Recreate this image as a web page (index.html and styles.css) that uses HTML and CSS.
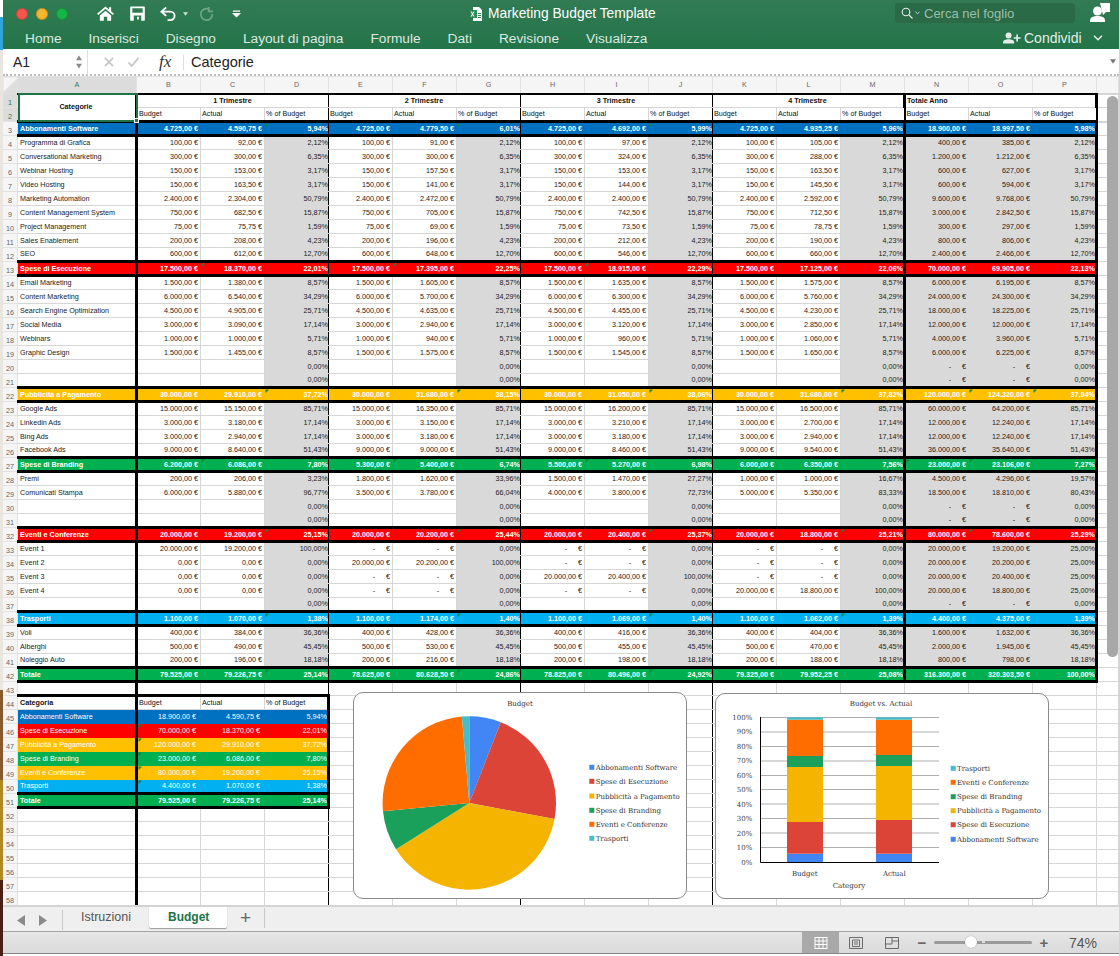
FILE: index.html
```html
<!DOCTYPE html>
<html lang="it">
<head>
<meta charset="utf-8">
<title>Marketing Budget Template</title>
<link rel="stylesheet" href="styles.css">
</head>
<body>
<div class="desktop-edge"></div>
<div class="window">
<header class="ribbon">
  <div class="titlebar">
    <div class="lights"><i class="light red"></i><i class="light yellow"></i><i class="light green"></i></div>
    <div class="quick">
      <svg class="ic home" viewBox="0 0 18 16"><path d="M9 .6 0 8.2l1.2 1.4L9 3l7.8 6.6L18 8.2l-3-2.6V1.4h-2.2v2.3z"/><path d="M3 10 9 5l6 5v5.6h-4.2v-4.2H7.2v4.2H3z"/></svg>
      <svg class="ic floppy" viewBox="0 0 16 16"><path fill-rule="evenodd" d="M1 .5h14a.8.8 0 0 1 .8.8v13.6a.8.8 0 0 1-.8.8H1a.8.8 0 0 1-.8-.8V1.300A.8.8 0 0 1 1 .5zM2.500 2.500v4.700h11V2.500zM4 10v5.700h8V10zM7.500 11.500h2v3h-2z"/></svg>
      <svg class="ic undo" viewBox="0 0 18 16"><path d="M6.500 1.500 1.500 6l5 4.500M2 6h9a4.500 4.500 0 0 1 0 9H8" fill="none" stroke="#fff" stroke-width="2"/></svg>
      <svg class="ic caret" viewBox="0 0 6 4"><path d="M0 0h6L3 4z"/></svg>
      <svg class="ic redo" viewBox="0 0 16 18"><path d="M10.500 1v5h5M10.800 3.500A6.500 6.500 0 1 0 14.500 9" fill="none" stroke="#6da585" stroke-width="2"/></svg>
      <svg class="ic custom" viewBox="0 0 10 8"><path d="M1 0h8v1.500H1zM0 3h10L5 8z"/></svg>
    </div>
    <div class="doc-title">
      <svg class="doc-icon" viewBox="0 0 12 14"><path d="M3 0h6l3 3v11H3z" fill="#fff"/><path d="M0 3h7v8H0z" fill="#2e8b57"/><path d="m1.500 4.500 1 1.500 1-1.500h1L3.100 7l1.500 2.500h-1l-1-1.600-1 1.600h-1L2 7 .6 4.500z" fill="#fff"/><path d="M8 6h3v1H8zm0 2h3v1H8zm0 2h3v1H8z" fill="#2e8b57"/></svg>
      <span>Marketing Budget Template</span>
    </div>
    <div class="search">
      <svg class="search-ic" viewBox="0 0 12 12"><circle cx="5" cy="5" r="3.800"/><path d="m8 8 3.500 3.500"/></svg>
      <svg class="search-caret" viewBox="0 0 6 4"><path d="M.5.500 3 3 5.500.500"/></svg>
      <span>Cerca nel foglio</span>
    </div>
    <svg class="user" viewBox="0 0 20 20"><path d="M10 0h10v9h-4l-3 3z" /><circle cx="7.500" cy="8" r="4.500"/><path d="M0 19v-1.500C0 14 4 13 7.500 13s7.500 1 7.500 4.500V19z"/></svg>
  </div>
  <nav class="tabs">
    <span>Home</span><span>Inserisci</span><span>Disegno</span><span>Layout di pagina</span><span>Formule</span><span>Dati</span><span>Revisione</span><span>Visualizza</span>
    <div class="share">
      <svg class="share-ic" viewBox="0 0 21 14"><circle cx="6.500" cy="4" r="3.500"/><path d="M0 13.500V12c0-2.500 3-3.500 6.500-3.500S13 9.500 13 12v1.500z"/><path d="M15.500 3h2v3h3v2h-3v3h-2V8h-3V6h3z"/></svg>
      <span>Condividi</span>
      <svg class="chev" viewBox="0 0 10 6"><path d="M1 .8 5 4.800 9 .8"/></svg>
    </div>
  </nav>
</header>

<div class="formula">
  <div class="namebox"><span>A1</span><svg class="spin" viewBox="0 0 7 15"><path d="M3.500 0 7 5.500H0zM3.500 15 0 9.500h7z"/></svg></div>
  <svg class="fx-ic" viewBox="0 0 11 11"><path d="m1 1 9 9M10 1 1 10"/></svg>
  <svg class="fx-ic check" viewBox="0 0 13 11"><path d="m1 6 3.500 4L12 1"/></svg>
  <em class="fx">fx</em>
  <span class="formula-text">Categorie</span>
  <svg class="fx-down" viewBox="0 0 7 5"><path d="M0 0h7L3.500 5z"/></svg>
</div>

<main class="sheet">
<table class="grid">
<colgroup><col class="c-row"><col class="c-a"><col span="15" class="c-n"><col class="c-q"></colgroup>
<thead>
<tr class="cols"><th class="corner"></th><th class="sel">A</th><th>B</th><th>C</th><th>D</th><th>E</th><th>F</th><th>G</th><th>H</th><th>I</th><th>J</th><th>K</th><th>L</th><th>M</th><th>N</th><th>O</th><th>P</th><th></th></tr>
<tr class="r1"><th class="sel">1</th><td rowspan="2" class="cat">Categorie</td><td colspan="3" class="q qe">1 Trimestre</td><td colspan="3" class="q qe">2 Trimestre</td><td colspan="3" class="q qe">3 Trimestre</td><td colspan="3" class="q qx">4 Trimestre</td><td colspan="3" class="q qt qx">Totale Anno</td><td></td></tr>
<tr class="r2"><th class="sel">2</th><td>Budget</td><td>Actual</td><td class="qe">% of Budget</td><td>Budget</td><td>Actual</td><td class="qe">% of Budget</td><td>Budget</td><td>Actual</td><td class="qe">% of Budget</td><td>Budget</td><td>Actual</td><td class="qm">% of Budget</td><td>Budget</td><td>Actual</td><td class="qm">% of Budget</td><td class="free"></td></tr>
</thead>
<tbody class="main">
<tr class="b blue"><th>3<td>Abbonamenti Software<td>4.725,00 €<td>4.590,75 €<td class="t">5,94%<td>4.725,00 €<td>4.779,50 €<td class="t">6,01%<td>4.725,00 €<td>4.692,00 €<td class="t">5,99%<td>4.725,00 €<td>4.935,25 €<td>5,96%<td>18.900,00 €<td>18.997,50 €<td>5,98%<td>
<tr class="d"><th>4<td>Programma di Grafica<td>100,00 €<td>92,00 €<td>2,12%<td>100,00 €<td>91,00 €<td>2,12%<td>100,00 €<td>97,00 €<td>2,12%<td>100,00 €<td>105,00 €<td>2,12%<td>400,00 €<td>385,00 €<td>2,12%<td>
<tr class="d"><th>5<td>Conversational Marketing<td>300,00 €<td>300,00 €<td>6,35%<td>300,00 €<td>300,00 €<td>6,35%<td>300,00 €<td>324,00 €<td>6,35%<td>300,00 €<td>288,00 €<td>6,35%<td>1.200,00 €<td>1.212,00 €<td>6,35%<td>
<tr class="d"><th>6<td>Webinar Hosting<td>150,00 €<td>153,00 €<td>3,17%<td>150,00 €<td>157,50 €<td>3,17%<td>150,00 €<td>153,00 €<td>3,17%<td>150,00 €<td>163,50 €<td>3,17%<td>600,00 €<td>627,00 €<td>3,17%<td>
<tr class="d"><th>7<td>Video Hosting<td>150,00 €<td>163,50 €<td>3,17%<td>150,00 €<td>141,00 €<td>3,17%<td>150,00 €<td>144,00 €<td>3,17%<td>150,00 €<td>145,50 €<td>3,17%<td>600,00 €<td>594,00 €<td>3,17%<td>
<tr class="d"><th>8<td>Marketing Automation<td>2.400,00 €<td>2.304,00 €<td>50,79%<td>2.400,00 €<td>2.472,00 €<td>50,79%<td>2.400,00 €<td>2.400,00 €<td>50,79%<td>2.400,00 €<td>2.592,00 €<td>50,79%<td>9.600,00 €<td>9.768,00 €<td>50,79%<td>
<tr class="d"><th>9<td>Content Management System<td>750,00 €<td>682,50 €<td>15,87%<td>750,00 €<td>705,00 €<td>15,87%<td>750,00 €<td>742,50 €<td>15,87%<td>750,00 €<td>712,50 €<td>15,87%<td>3.000,00 €<td>2.842,50 €<td>15,87%<td>
<tr class="d"><th>10<td>Project Management<td>75,00 €<td>75,75 €<td>1,59%<td>75,00 €<td>69,00 €<td>1,59%<td>75,00 €<td>73,50 €<td>1,59%<td>75,00 €<td>78,75 €<td>1,59%<td>300,00 €<td>297,00 €<td>1,59%<td>
<tr class="d"><th>11<td>Sales Enablement<td>200,00 €<td>208,00 €<td>4,23%<td>200,00 €<td>196,00 €<td>4,23%<td>200,00 €<td>212,00 €<td>4,23%<td>200,00 €<td>190,00 €<td>4,23%<td>800,00 €<td>806,00 €<td>4,23%<td>
<tr class="d"><th>12<td>SEO<td>600,00 €<td>612,00 €<td>12,70%<td>600,00 €<td>648,00 €<td>12,70%<td>600,00 €<td>546,00 €<td>12,70%<td>600,00 €<td>660,00 €<td>12,70%<td>2.400,00 €<td>2.466,00 €<td>12,70%<td>
<tr class="b red"><th>13<td>Spese di Esecuzione<td>17.500,00 €<td class="t">18.370,00 €<td>22,01%<td>17.500,00 €<td class="t">17.395,00 €<td>22,25%<td>17.500,00 €<td class="t">18.915,00 €<td>22,29%<td>17.500,00 €<td>17.125,00 €<td>22,06%<td>70.000,00 €<td>69.905,00 €<td>22,13%<td>
<tr class="d"><th>14<td>Email Marketing<td>1.500,00 €<td>1.380,00 €<td>8,57%<td>1.500,00 €<td>1.605,00 €<td>8,57%<td>1.500,00 €<td>1.635,00 €<td>8,57%<td>1.500,00 €<td>1.575,00 €<td>8,57%<td>6.000,00 €<td>6.195,00 €<td>8,57%<td>
<tr class="d"><th>15<td>Content Marketing<td>6.000,00 €<td>6.540,00 €<td>34,29%<td>6.000,00 €<td>5.700,00 €<td>34,29%<td>6.000,00 €<td>6.300,00 €<td>34,29%<td>6.000,00 €<td>5.760,00 €<td>34,29%<td>24.000,00 €<td>24.300,00 €<td>34,29%<td>
<tr class="d"><th>16<td>Search Engine Optimization<td>4.500,00 €<td>4.905,00 €<td>25,71%<td>4.500,00 €<td>4.635,00 €<td>25,71%<td>4.500,00 €<td>4.455,00 €<td>25,71%<td>4.500,00 €<td>4.230,00 €<td>25,71%<td>18.000,00 €<td>18.225,00 €<td>25,71%<td>
<tr class="d"><th>17<td>Social Media<td>3.000,00 €<td>3.090,00 €<td>17,14%<td>3.000,00 €<td>2.940,00 €<td>17,14%<td>3.000,00 €<td>3.120,00 €<td>17,14%<td>3.000,00 €<td>2.850,00 €<td>17,14%<td>12.000,00 €<td>12.000,00 €<td>17,14%<td>
<tr class="d"><th>18<td>Webinars<td>1.000,00 €<td>1.000,00 €<td>5,71%<td>1.000,00 €<td>940,00 €<td>5,71%<td>1.000,00 €<td>960,00 €<td>5,71%<td>1.000,00 €<td>1.060,00 €<td>5,71%<td>4.000,00 €<td>3.960,00 €<td>5,71%<td>
<tr class="d"><th>19<td>Graphic Design<td>1.500,00 €<td>1.455,00 €<td>8,57%<td>1.500,00 €<td>1.575,00 €<td>8,57%<td>1.500,00 €<td>1.545,00 €<td>8,57%<td>1.500,00 €<td>1.650,00 €<td>8,57%<td>6.000,00 €<td>6.225,00 €<td>8,57%<td>
<tr class="d"><th>20<td><td><td><td>0,00%<td><td><td>0,00%<td><td><td>0,00%<td><td><td>0,00%<td>-&emsp;&ensp;€<td>-&emsp;&ensp;€<td>0,00%<td>
<tr class="d"><th>21<td><td><td><td>0,00%<td><td><td>0,00%<td><td><td>0,00%<td><td><td>0,00%<td>-&emsp;&ensp;€<td>-&emsp;&ensp;€<td>0,00%<td>
<tr class="b amber"><th>22<td>Pubblicità a Pagamento<td>30.000,00 €<td>29.910,00 €<td class="t">37,72%<td>30.000,00 €<td>31.680,00 €<td class="t">38,15%<td>30.000,00 €<td>31.050,00 €<td class="t">38,06%<td>30.000,00 €<td>31.680,00 €<td class="t">37,82%<td>120.000,00 €<td class="t">124.320,00 €<td class="t">37,94%<td>
<tr class="d"><th>23<td>Google Ads<td>15.000,00 €<td>15.150,00 €<td>85,71%<td>15.000,00 €<td>16.350,00 €<td>85,71%<td>15.000,00 €<td>16.200,00 €<td>85,71%<td>15.000,00 €<td>16.500,00 €<td>85,71%<td>60.000,00 €<td>64.200,00 €<td>85,71%<td>
<tr class="d"><th>24<td>Linkedin Ads<td>3.000,00 €<td>3.180,00 €<td>17,14%<td>3.000,00 €<td>3.150,00 €<td>17,14%<td>3.000,00 €<td>3.210,00 €<td>17,14%<td>3.000,00 €<td>2.700,00 €<td>17,14%<td>12.000,00 €<td>12.240,00 €<td>17,14%<td>
<tr class="d"><th>25<td>Bing Ads<td>3.000,00 €<td>2.940,00 €<td>17,14%<td>3.000,00 €<td>3.180,00 €<td>17,14%<td>3.000,00 €<td>3.180,00 €<td>17,14%<td>3.000,00 €<td>2.940,00 €<td>17,14%<td>12.000,00 €<td>12.240,00 €<td>17,14%<td>
<tr class="d"><th>26<td>Facebook Ads<td>9.000,00 €<td>8.640,00 €<td>51,43%<td>9.000,00 €<td>9.000,00 €<td>51,43%<td>9.000,00 €<td>8.460,00 €<td>51,43%<td>9.000,00 €<td>9.540,00 €<td>51,43%<td>36.000,00 €<td>35.640,00 €<td>51,43%<td>
<tr class="b green"><th>27<td>Spese di Branding<td>6.200,00 €<td class="t">6.086,00 €<td>7,80%<td>5.300,00 €<td class="t">5.400,00 €<td>6,74%<td>5.500,00 €<td class="t">5.270,00 €<td>6,98%<td>6.000,00 €<td>6.350,00 €<td>7,56%<td class="t">23.000,00 €<td class="t">23.106,00 €<td>7,27%<td>
<tr class="d"><th>28<td>Premi<td>200,00 €<td>206,00 €<td>3,23%<td>1.800,00 €<td>1.620,00 €<td>33,96%<td>1.500,00 €<td>1.470,00 €<td>27,27%<td>1.000,00 €<td>1.000,00 €<td>16,67%<td>4.500,00 €<td>4.296,00 €<td>19,57%<td>
<tr class="d"><th>29<td>Comunicati Stampa<td>6.000,00 €<td>5.880,00 €<td>96,77%<td>3.500,00 €<td>3.780,00 €<td>66,04%<td>4.000,00 €<td>3.800,00 €<td>72,73%<td>5.000,00 €<td>5.350,00 €<td>83,33%<td>18.500,00 €<td>18.810,00 €<td>80,43%<td>
<tr class="d"><th>30<td><td><td><td>0,00%<td><td><td>0,00%<td><td><td>0,00%<td><td><td>0,00%<td>-&emsp;&ensp;€<td>-&emsp;&ensp;€<td>0,00%<td>
<tr class="d"><th>31<td><td><td><td>0,00%<td><td><td>0,00%<td><td><td>0,00%<td><td><td>0,00%<td>-&emsp;&ensp;€<td>-&emsp;&ensp;€<td>0,00%<td>
<tr class="b red"><th>32<td>Eventi e Conferenze<td>20.000,00 €<td>19.200,00 €<td class="t">25,15%<td>20.000,00 €<td>20.200,00 €<td class="t">25,44%<td>20.000,00 €<td>20.400,00 €<td class="t">25,37%<td>20.000,00 €<td>18.800,00 €<td class="t">25,21%<td>80.000,00 €<td class="t">78.600,00 €<td>25,29%<td>
<tr class="d"><th>33<td>Event 1<td>20.000,00 €<td>19.200,00 €<td>100,00%<td>-&emsp;&ensp;€<td>-&emsp;&ensp;€<td>0,00%<td>-&emsp;&ensp;€<td>-&emsp;&ensp;€<td>0,00%<td>-&emsp;&ensp;€<td>-&emsp;&ensp;€<td>0,00%<td>20.000,00 €<td>19.200,00 €<td>25,00%<td>
<tr class="d"><th>34<td>Event 2<td>0,00 €<td>0,00 €<td>0,00%<td>20.000,00 €<td>20.200,00 €<td>100,00%<td>-&emsp;&ensp;€<td>-&emsp;&ensp;€<td>0,00%<td>-&emsp;&ensp;€<td>-&emsp;&ensp;€<td>0,00%<td>20.000,00 €<td>20.200,00 €<td>25,00%<td>
<tr class="d"><th>35<td>Event 3<td>0,00 €<td>0,00 €<td>0,00%<td>-&emsp;&ensp;€<td>-&emsp;&ensp;€<td>0,00%<td>20.000,00 €<td>20.400,00 €<td>100,00%<td>-&emsp;&ensp;€<td>-&emsp;&ensp;€<td>0,00%<td>20.000,00 €<td>20.400,00 €<td>25,00%<td>
<tr class="d"><th>36<td>Event 4<td>0,00 €<td>0,00 €<td>0,00%<td>-&emsp;&ensp;€<td>-&emsp;&ensp;€<td>0,00%<td>-&emsp;&ensp;€<td>-&emsp;&ensp;€<td>0,00%<td>20.000,00 €<td>18.800,00 €<td>100,00%<td>20.000,00 €<td>18.800,00 €<td>25,00%<td>
<tr class="d"><th>37<td><td><td><td>0,00%<td><td><td>0,00%<td><td><td>0,00%<td><td><td>0,00%<td>-&emsp;&ensp;€<td>-&emsp;&ensp;€<td>0,00%<td>
<tr class="b cyan"><th>38<td>Trasporti<td>1.100,00 €<td>1.070,00 €<td class="t">1,38%<td>1.100,00 €<td>1.174,00 €<td class="t">1,40%<td>1.100,00 €<td>1.069,00 €<td class="t">1,40%<td>1.100,00 €<td>1.062,00 €<td class="t">1,39%<td>4.400,00 €<td>4.375,00 €<td>1,39%<td>
<tr class="d"><th>39<td>Voli<td>400,00 €<td>384,00 €<td>36,36%<td>400,00 €<td>428,00 €<td>36,36%<td>400,00 €<td>416,00 €<td>36,36%<td>400,00 €<td>404,00 €<td>36,36%<td>1.600,00 €<td>1.632,00 €<td>36,36%<td>
<tr class="d"><th>40<td>Alberghi<td>500,00 €<td>490,00 €<td>45,45%<td>500,00 €<td>530,00 €<td>45,45%<td>500,00 €<td>455,00 €<td>45,45%<td>500,00 €<td>470,00 €<td>45,45%<td>2.000,00 €<td>1.945,00 €<td>45,45%<td>
<tr class="d"><th>41<td>Noleggio Auto<td>200,00 €<td>196,00 €<td>18,18%<td>200,00 €<td>216,00 €<td>18,18%<td>200,00 €<td>198,00 €<td>18,18%<td>200,00 €<td>188,00 €<td>18,18%<td>800,00 €<td>798,00 €<td>18,18%<td>
<tr class="b green"><th>42<td>Totale<td>79.525,00 €<td>79.226,75 €<td class="t">25,14%<td>78.625,00 €<td>80.628,50 €<td class="t">24,86%<td>78.825,00 €<td>80.496,00 €<td class="t">24,92%<td>79.325,00 €<td>79.952,25 €<td>25,08%<td>316.300,00 €<td>320.303,50 €<td>100,00%<td>
</tbody>
<tbody class="rest">
<tr><th>43<td><td><td><td><td><td><td><td><td><td><td><td><td><td><td><td><td>
<tr class="s shead"><th>44<td>Categoria<td>Budget<td>Actual<td>% of Budget<td><td><td><td><td><td><td><td><td><td><td><td><td>
<tr class="s blue"><th>45<td>Abbonamenti Software<td>18.900,00 €<td>4.590,75 €<td>5,94%<td><td><td><td><td><td><td><td><td><td><td><td><td>
<tr class="s red"><th>46<td>Spese di Esecuzione<td class="t">70.000,00 €<td>18.370,00 €<td>22,01%<td><td><td><td><td><td><td><td><td><td><td><td><td>
<tr class="s amber"><th>47<td>Pubblicità a Pagamento<td class="t">120.000,00 €<td>29.910,00 €<td>37,72%<td><td><td><td><td><td><td><td><td><td><td><td><td>
<tr class="s green"><th>48<td>Spese di Branding<td class="t">23.000,00 €<td>6.086,00 €<td>7,80%<td><td><td><td><td><td><td><td><td><td><td><td><td>
<tr class="s amber"><th>49<td>Eventi e Conferenze<td class="t">80.000,00 €<td>19.200,00 €<td>25,15%<td><td><td><td><td><td><td><td><td><td><td><td><td>
<tr class="s cyan"><th>50<td>Trasporti<td class="t">4.400,00 €<td>1.070,00 €<td>1,38%<td><td><td><td><td><td><td><td><td><td><td><td><td>
<tr class="s green stotal"><th>51<td>Totale<td>79.525,00 €<td>79.226,75 €<td>25,14%<td><td><td><td><td><td><td><td><td><td><td><td><td>
<tr><th>52<td><td><td><td><td><td><td><td><td><td><td><td><td><td><td><td><td>
<tr><th>53<td><td><td><td><td><td><td><td><td><td><td><td><td><td><td><td><td>
<tr><th>54<td><td><td><td><td><td><td><td><td><td><td><td><td><td><td><td><td>
<tr><th>55<td><td><td><td><td><td><td><td><td><td><td><td><td><td><td><td><td>
<tr><th>56<td><td><td><td><td><td><td><td><td><td><td><td><td><td><td><td><td>
<tr><th>57<td><td><td><td><td><td><td><td><td><td><td><td><td><td><td><td><td>
<tr><th>58<td><td><td><td><td><td><td><td><td><td><td><td><td><td><td><td><td>
</tbody>
</table>

<div class="selection"><i class="handle"></i></div>
<div class="thumb"></div>

<figure class="chart chart-budget">
<svg viewBox="0 0 334 207">
  <text class="ctitle" x="167" y="13.800" text-anchor="middle">Budget</text>
  <path class="s-blue" d="M116.300 111V24.300A86.700 86.700 0 0 1 147.800 30.200Z"/>
  <path class="s-red" d="M116.300 111 147.800 30.200A86.700 86.700 0 0 1 201.500 127.100Z"/>
  <path class="s-amber" d="M116.300 111 201.500 127.100A86.700 86.700 0 0 1 43 157.200Z"/>
  <path class="s-green" d="M116.300 111 43 157.200A86.700 86.700 0 0 1 30 119.300Z"/>
  <path class="s-orange" d="M116.300 111 30 119.300A86.700 86.700 0 0 1 108.900 24.600Z"/>
  <path class="s-teal" d="M116.300 111 108.900 24.600A86.700 86.700 0 0 1 116.300 24.300Z"/>
  <rect class="s-blue" x="236.300" y="72.800" width="5" height="5"/><text class="clab" x="242.700" y="77.800">Abbonamenti Software</text>
  <rect class="s-red" x="236.300" y="86.800" width="5" height="5"/><text class="clab" x="242.700" y="91.800">Spese di Esecuzione</text>
  <rect class="s-amber" x="236.300" y="101.500" width="5" height="5"/><text class="clab" x="242.700" y="106.500">Pubblicità a Pagamento</text>
  <rect class="s-green" x="236.300" y="115.800" width="5" height="5"/><text class="clab" x="242.700" y="120.800">Spese di Branding</text>
  <rect class="s-orange" x="236.300" y="129.800" width="5" height="5"/><text class="clab" x="242.700" y="134.800">Eventi e Conferenze</text>
  <rect class="s-teal" x="236.300" y="143.800" width="5" height="5"/><text class="clab" x="242.700" y="148.800">Trasporti</text>
</svg>
</figure>

<figure class="chart chart-actual">
<svg viewBox="0 0 334 206">
  <text class="ctitle" x="166" y="12.800" text-anchor="middle">Budget vs. Actual</text>
  <path class="gridline" d="M45 24.500h179M45 39h179M45 53.500h179M45 68h179M45 82.500h179M45 96.500h179M45 111h179M45 125.500h179M45 140h179M45 154.500h179"/>
  <rect class="s-blue" x="72" y="160.700" width="36" height="8.300"/>
  <rect class="s-red" x="72" y="129" width="36" height="31.700"/>
  <rect class="s-amber" x="72" y="74" width="36" height="55"/>
  <rect class="s-green" x="72" y="63" width="36" height="11"/>
  <rect class="s-orange" x="72" y="26.700" width="36" height="36.300"/>
  <rect class="s-teal" x="72" y="24.300" width="36" height="2.400"/>
  <rect class="s-blue" x="161" y="160.700" width="36" height="8.300"/>
  <rect class="s-red" x="161" y="127" width="36" height="33.700"/>
  <rect class="s-amber" x="161" y="73" width="36" height="54"/>
  <rect class="s-green" x="161" y="62" width="36" height="11"/>
  <rect class="s-orange" x="161" y="26.700" width="36" height="35.300"/>
  <rect class="s-teal" x="161" y="24.300" width="36" height="2.400"/>
  <path class="axis" d="M45.500 24v145.500H224"/>
  <g class="ctick" text-anchor="end">
    <text x="37.300" y="26.800">100%</text><text x="37.300" y="41.300">90%</text><text x="37.300" y="55.700">80%</text><text x="37.300" y="70.200">70%</text><text x="37.300" y="84.700">60%</text><text x="37.300" y="99.200">50%</text><text x="37.300" y="113.600">40%</text><text x="37.300" y="128.100">30%</text><text x="37.300" y="142.600">20%</text><text x="37.300" y="157">10%</text><text x="37.300" y="171.500">0%</text>
  </g>
  <text class="clab" x="89.700" y="182.500" text-anchor="middle">Budget</text>
  <text class="clab" x="179.300" y="182.500" text-anchor="middle">Actual</text>
  <text class="clab" x="134" y="194.800" text-anchor="middle">Category</text>
  <rect class="s-teal" x="235.700" y="72.800" width="5" height="5"/><text class="clab" x="242" y="77.800">Trasporti</text>
  <rect class="s-orange" x="235.700" y="86.800" width="5" height="5"/><text class="clab" x="242" y="91.800">Eventi e Conferenze</text>
  <rect class="s-green" x="235.700" y="101.200" width="5" height="5"/><text class="clab" x="242" y="106.200">Spese di Branding</text>
  <rect class="s-amber" x="235.700" y="115.200" width="5" height="5"/><text class="clab" x="242" y="120.200">Pubblicità a Pagamento</text>
  <rect class="s-red" x="235.700" y="129.200" width="5" height="5"/><text class="clab" x="242" y="134.200">Spese di Esecuzione</text>
  <rect class="s-blue" x="235.700" y="143.800" width="5" height="5"/><text class="clab" x="242" y="148.800">Abbonamenti Software</text>
</svg>
</figure>
</main>

<footer class="sheet-tabs">
  <div class="tab-nav">
    <svg viewBox="0 0 8 11"><path d="M8 0v11L0 5.500z"/></svg>
    <svg viewBox="0 0 8 11"><path d="M0 0v11l8-5.500z"/></svg>
  </div>
  <span class="tab">Istruzioni</span>
  <span class="tab active">Budget</span>
  <span class="tab-add">+</span>
</footer>
<div class="status">
  <button class="view on"><svg viewBox="0 0 13 12"><path d="M0 0h13v12H0zM1 1v2.500h3V1zm4 0v2.500h3V1zm4 0v2.500h3V1zM1 4.500V7h3V4.500zm4 0V7h3V4.500zm4 0V7h3V4.500zM1 8v3h3V8zm4 0v3h3V8zm4 0v3h3V8z" fill-rule="evenodd"/></svg></button>
  <button class="view v2"><svg viewBox="0 0 14 12"><path class="ln" d="M.5.500h13v11H.5zM3.500 3h7v6.500h-7zM5 5h4M5 7h4"/></svg></button>
  <button class="view v3"><svg viewBox="0 0 14 12"><path class="ln" d="M.5.500h13v11H.5zM.5 7H7V.500M7 4h6.500"/></svg></button>
  <div class="zoom">
    <span class="z-sign">−</span>
    <div class="slider"><i class="tick"></i><i class="knob"></i></div>
    <span class="z-sign">+</span>
    <span class="z-val">74%</span>
  </div>
</div>
</div>
</body>
</html>
```
FILE: styles.css
```css
* { box-sizing: border-box; }
html, body { margin: 0; padding: 0; }
body {
  width: 1119px; height: 956px; overflow: hidden; display: flex;
  background: #fff; font-family: "Liberation Sans", Arial, sans-serif;
}
.desktop-edge {
  flex: 0 0 3px;
  background: linear-gradient(#fff 0 17px, #2fa3dc 17px 50px, #e9e6df 50px 690px, #8a5a2a 690px 780px, #b08a20 780px 880px, #4a1f16 880px);
}
.window { flex: 0 0 1116px; height: 954px; display: flex; flex-direction: column; }

/* ribbon */
.ribbon { height: 49px; background: linear-gradient(#327b54, #237449); color: #fff; flex: none; }
.titlebar { height: 27px; position: relative; display: flex; align-items: center; }
.lights { display: flex; gap: 8px; padding-left: 13px; width: 90px; }
.light { width: 12px; height: 12px; border-radius: 50%; border: 1px solid rgba(0,0,0,.18); }
.light.red { background: #f4564d; }
.light.yellow { background: #f5b52e; }
.light.green { background: #16b548; }
.quick { display: flex; align-items: center; height: 16px; }
.ic { fill: #fff; display: block; flex: none; }
.home { width: 17px; height: 15px; margin-left: 4px; }
.floppy { width: 15px; height: 15px; margin-left: 16px; fill: #fff; }
.undo { width: 17px; height: 15px; margin-left: 15px; }
.caret { width: 5px; height: 4px; margin-left: 6px; fill: #cfe0d6; }
.redo { width: 15px; height: 16px; margin-left: 11px; fill: none; }
.custom { width: 9px; height: 8px; margin-left: 18px; }
.doc-title { position: absolute; left: 467px; top: 0; height: 27px; display: flex; align-items: center; gap: 6px; font-size: 13.8px; }
.doc-icon { width: 12px; height: 14px; }
.search { position: absolute; left: 892px; top: 3px; width: 180px; height: 20px; background: #2a6a46; border-radius: 4px; display: flex; align-items: center; font-size: 13px; color: #9bbfab; padding-left: 6px; }
.search-ic { width: 12px; height: 12px; fill: none; stroke: #e8f0eb; stroke-width: 1.1; }
.search-caret { width: 5px; height: 4px; margin: 0 4px 0 2px; fill: none; stroke: #e8f0eb; }
.user { position: absolute; left: 1087px; top: 3px; width: 20px; height: 20px; fill: #fff; }
.tabs { height: 22px; display: flex; align-items: center; gap: 27px; padding-left: 22px; font-size: 13.7px; position: relative; color: #dce8e1; }
.share { position: absolute; left: 1000px; top: 0; height: 22px; display: flex; align-items: center; color: #e4eee8; font-size: 14px; }
.share-ic { width: 18px; height: 12px; margin-right: 3px; fill: #e4eee8; }
.chev { width: 10px; height: 6px; margin-left: 11px; fill: none; stroke: #e4eee8; stroke-width: 1.5; }

/* formula bar */
.formula { height: 27px; flex: none; display: flex; align-items: center; position: relative; border-bottom: 2px dotted #bdbdbd; padding-top: 1px; font-size: 14px; color: #222; }
.namebox { width: 85px; height: 25px; border-right: 1px solid #ddd; padding-left: 10px; display: flex; align-items: center; justify-content: space-between; padding-right: 5px; }
.spin { width: 6px; height: 14px; fill: #8a8a8a; }
.fx-ic { width: 10px; height: 10px; fill: none; stroke: #c8c8c8; stroke-width: 2; margin-left: 16px; }
.fx-ic.check { width: 13px; margin-left: 13px; }
.fx { font-family: "Liberation Serif", serif; font-size: 17px; margin-left: 19px; width: 25px; border-right: 1px solid #ddd; height: 15px; line-height: 14px; color: #333; }
.formula-text { margin-left: 7px; font-size: 14.5px; }
.fx-down { position: absolute; right: 3px; top: 10px; width: 6px; height: 5px; fill: #777; }

/* sheet */
.sheet { position: relative; height: 829px; flex: none; overflow: hidden; background: #fff; }
.grid { border-collapse: collapse; table-layout: fixed; width: 1116px; margin-left: -1px; font-size: 7.2px; color: #1a1a1a; }
.c-row { width: 15px; }
.c-a { width: 119px; }
.c-n { width: 64px; }
.c-q { width: 22px; }
.grid tr { height: 14px; }
.grid td, .grid th {
  height: 14px; padding: 0 2px 0 2px; line-height: 8px; white-space: nowrap; overflow: hidden;
  border: 1px solid #d6d6d6; text-align: right; font-weight: normal;
}
.grid th { background: #f5f5f5; color: #666; text-align: center; vertical-align: bottom; padding: 0; border-color: #e2e2e2; }
.grid .cols, .grid .cols th { height: 17px; vertical-align: middle; }
.grid th.sel { background: #dcdcdc; color: #2f7d52; }
.grid th.corner { background: linear-gradient(135deg, #f5f5f5 50%, #dedede 50%); }

/* header rows */
.r1 td, .r2 td { text-align: left; color: #111; padding-left: 1px; }
.r1 td { border-top: 2px solid #000; border-bottom: 1px solid #d6d6d6; }
.r2 td { border-bottom: 2px solid #000; }
.r1 .q { text-align: center; font-weight: bold; }
.r1 .qt { text-align: left; }
.r1 .cat { text-align: center; font-weight: bold; border-right: 3px solid #000; border-bottom: 3px solid #000; }
.qe { border-right: 1px solid #000 !important; }
.qx { border-right: 3px solid #000 !important; }
.qm { border-right: 2px solid #000 !important; }
.r1 td:last-child, .r2 td:last-child { border-top-color: #d6d6d6; border-bottom-color: #d6d6d6; }

/* body */
.main td:nth-child(2), .rest td:nth-child(2) { text-align: left; }
.main td:nth-child(5), .main td:nth-child(8), .main td:nth-child(11), .main td:nth-child(14), .main td:nth-child(17) { padding-right: 0; }
.d td:nth-child(5), .d td:nth-child(8), .d td:nth-child(11), .d td:nth-child(14), .d td:nth-child(15), .d td:nth-child(16), .d td:nth-child(17) {
  background: #d9d9d9; border-color: #d9d9d9;
}
.blue { --c: #0070c0; }
.red { --c: #ff0000; }
.amber { --c: #ffc000; }
.green { --c: #00b050; }
.cyan { --c: #00b0f0; }
.b td:not(:last-child), .s td:nth-child(-n+5) { background-color: var(--c); border-color: var(--c); color: #fff; }
.b td:not(:last-child) { font-weight: bold; border-top: 3px solid #000; border-bottom: 3px solid #000; }
.shead td:nth-child(-n+5) { background-color: #fff; color: #111; border-top: 3px solid #000; border-bottom-color: #d6d6d6; border-left-color: #d6d6d6; border-right-color: #d6d6d6; text-align: left; }
.shead td:nth-child(2) { font-weight: bold; }
.s td:nth-child(3), .s td:nth-child(4) { padding-right: 4px; }
.shead td:nth-child(3), .shead td:nth-child(4) { padding-left: 1px; }
.s td:nth-child(5) { padding-right: 0; }
.shead td:nth-child(5) { padding-left: 1px; }
.stotal td:nth-child(-n+5) { font-weight: bold; border-top: 3px solid #000; border-bottom: 3px solid #000; }
.main td:nth-child(2), .rest td:nth-child(2) { border-right: 3px solid #000; }
.main td:nth-child(5), .main td:nth-child(8), .main td:nth-child(11),
.rest td:nth-child(5), .rest td:nth-child(8), .rest td:nth-child(11) { border-right: 1px solid #000; }
.main td:nth-child(14), .main td:nth-child(17) { border-right: 3px solid #000; }
.s td:nth-child(5) { border-right: 3px solid #000; }
.t { background-image: linear-gradient(135deg, #14803a 2.500px, transparent 2.500px); }

.selection { position: absolute; left: 15px; top: 17px; width: 120px; height: 29px; border: 2px solid #217346; pointer-events: none; }
.handle { position: absolute; right: -3px; bottom: -3px; width: 5px; height: 5px; background: #217346; border: 1px solid #fff; }
.thumb { position: absolute; left: 1104px; top: 20px; width: 11px; height: 561px; background: #a8a8a8; border-radius: 6px; }

/* charts */
.chart { position: absolute; margin: 0; background: #fff; border: 1.500px solid #8a8a8a; border-radius: 10px; overflow: hidden; }
.chart svg { position: absolute; left: -1.500px; top: -1.500px; display: block; }
.chart-budget { left: 350px; top: 616px; width: 334px; height: 207px; }
.chart-budget svg { width: 334px; height: 207px; }
.chart-actual { left: 712px; top: 617px; width: 334px; height: 206px; }
.chart-actual svg { width: 334px; height: 206px; }
.ctitle, .clab, .ctick { font-family: "DejaVu Serif", "Liberation Serif", serif; font-size: 7px; fill: #333; }
.ctick text { font-size: 7px; fill: #444; }
.s-blue { fill: #4285f4; }
.s-red { fill: #db4437; }
.s-amber { fill: #f4b400; }
.s-green { fill: #1ba05c; }
.s-orange { fill: #ff6d00; }
.s-teal { fill: #46bdc6; }
.gridline { fill: none; stroke: #b0b0b0; stroke-width: 1; }
.axis { fill: none; stroke: #000; stroke-width: 1; }

/* sheet tabs */
.sheet-tabs { height: 27px; flex: none; background: #efefef; border-top: 2px solid #d4d4d4; border-bottom: 1px solid #a4a4a4; display: flex; align-items: flex-start; position: relative; font-size: 12.5px; color: #555; }
.tab-nav { width: 60px; height: 20px; margin-top: 3px; display: flex; align-items: center; gap: 14px; padding-left: 14px; border-right: 1px solid #c8c8c8; }
.tab-nav svg { width: 8px; height: 11px; fill: #8a8a8a; }
.tab { height: 21px; line-height: 20px; padding: 0 18px; }
.tab.active { background: #fff; color: #217346; font-weight: bold; font-size: 12px; box-shadow: 0 1px 1px #999; width: 78px; padding: 0 19px; border-radius: 0 0 2px 2px; }
.tab-add { width: 38px; height: 20px; margin-top: 1px; text-align: center; font-size: 19px; line-height: 20px; color: #666; border-right: 1px solid #c8c8c8; }

/* status */
.status { height: 22px; flex: none; background: linear-gradient(#e6e6e6, #dadada); display: flex; align-items: stretch; position: relative; padding-left: 799px; border-bottom: 1px solid #888; }
.view { width: 37px; border: 0; background: none; padding: 0; display: flex; align-items: center; justify-content: center; }
.view.on { background: #a9a9a9; }
.view.v2 { width: 34px; }
.view.v3 { width: 38px; }
.view svg { width: 14px; height: 12px; fill: #fff; }
.view .ln { fill: none; stroke: #6a6a6a; stroke-width: 1; }
.zoom { display: flex; align-items: center; margin-left: 5px; color: #666; }
.z-sign { width: 12px; text-align: center; font-size: 15px; font-weight: bold; }
.slider { width: 98px; height: 3px; background: #9a9a9a; border-radius: 2px; margin: 0 6px; position: relative; }
.knob { position: absolute; left: 31px; top: -5px; width: 12px; height: 12px; border-radius: 50%; background: #fff; box-shadow: 0 0 1px #777; }
.tick { position: absolute; left: 48px; top: -1px; width: 3px; height: 3px; background: #ddd; }
.z-val { font-size: 14px; margin-left: 19px; color: #555; }
```
